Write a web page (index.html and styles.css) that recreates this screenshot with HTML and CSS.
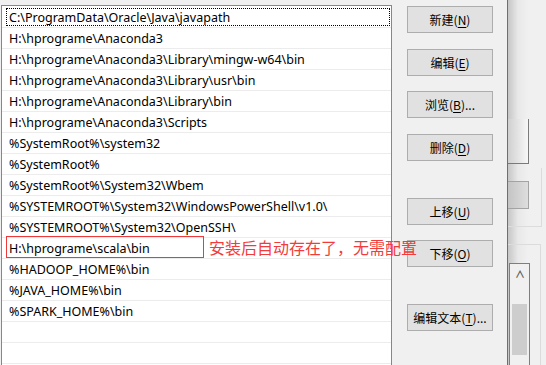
FILE: index.html
```html
<!DOCTYPE html>
<html lang="zh-CN">
<head>
    <meta charset="UTF-8">
    <title>编辑环境变量</title>
    <link rel="stylesheet" href="styles.css">
</head>
<body>
    <div class="page">
        <div class="dialog">
            <div class="path-list">
                <div class="row focused">C:\ProgramData\Oracle\Java\javapath</div>
                <div class="row">H:\hprograme\Anaconda3</div>
                <div class="row">H:\hprograme\Anaconda3\Library\mingw-w64\bin</div>
                <div class="row">H:\hprograme\Anaconda3\Library\usr\bin</div>
                <div class="row">H:\hprograme\Anaconda3\Library\bin</div>
                <div class="row">H:\hprograme\Anaconda3\Scripts</div>
                <div class="row">%SystemRoot%\system32</div>
                <div class="row">%SystemRoot%</div>
                <div class="row">%SystemRoot%\System32\Wbem</div>
                <div class="row">%SYSTEMROOT%\System32\WindowsPowerShell\v1.0\</div>
                <div class="row">%SYSTEMROOT%\System32\OpenSSH\</div>
                <div class="row">H:\hprograme\scala\bin</div>
                <div class="row">%HADOOP_HOME%\bin</div>
                <div class="row">%JAVA_HOME%\bin</div>
                <div class="row">%SPARK_HOME%\bin</div>
                <div class="row"></div>
                <div class="row"></div>
                <div class="row"></div>
            </div>

            <div class="actions">
                <button class="btn">新建(<u>N</u>)</button>
                <button class="btn">编辑(<u>E</u>)</button>
                <button class="btn">浏览(<u>B</u>)...</button>
                <button class="btn">删除(<u>D</u>)</button>
                <button class="btn">上移(<u>U</u>)</button>
                <button class="btn">下移(<u>O</u>)</button>
                <button class="btn">编辑文本(<u>T</u>)...</button>
            </div>
        </div>

        <!-- window behind the dialog -->
        <div class="behind">
            <div class="behind-field"></div>
            <div class="behind-group"></div>
            <div class="behind-btn"></div>
            <div class="behind-panel"></div>
            <div class="behind-scroll">
                <span class="arrow">&#x2227;</span>
                <div class="thumb"></div>
            </div>
        </div>

        <div class="mark"></div>
        <div class="note">安装后自动存在了，无需配置</div>
    </div>
</body>
</html>
```

FILE: styles.css
```css
body {
    margin: 0;
    background-color: #f0f0f0;
    font-family: "Segoe UI", "Noto Sans", "Noto Sans CJK SC", sans-serif;
    font-size: 12.5px;
    overflow: hidden;
}
.page {
    position: relative;
    display: flex;
    height: 365px;
    overflow: hidden;
}
.dialog {
    display: flex;
    width: 507px;
    border-right: 1px solid #6f6f6f;
}
.path-list {
    margin: 5px 0 0 1px;
    width: 389px;
    height: 380px;
    padding-top: 1px;
    background: white;
    border: 1px solid #828790;
    border-bottom: none;
}
.row {
    position: relative;
    height: 20px;
    line-height: 21px;
    padding-left: 7px;
    border-bottom: 1px solid #ececec;
    color: #000;
    white-space: nowrap;
}
.row.focused::after {
    content: "";
    position: absolute;
    top: 1px;
    left: 4px;
    right: 1px;
    bottom: 1px;
    border: 1px dotted #000;
}
.actions {
    display: flex;
    flex-direction: column;
    margin-left: 15px;
    padding-top: 6px;
}
.btn {
    width: 86px;
    height: 27px;
    padding: 0;
    background-color: #e1e1e1;
    border: 1px solid #adadad;
    font-family: "Noto Sans CJK SC", "Noto Sans", sans-serif;
    font-size: 12px;
    color: #000;
}
.btn u {
    text-underline-offset: 2px;
}
.btn:nth-child(2),
.btn:nth-child(4) {
    margin-top: 16px;
}
.btn:nth-child(3),
.btn:nth-child(6) {
    margin-top: 15px;
}
.btn:nth-child(5),
.btn:nth-child(7) {
    margin-top: 37px;
}
.behind {
    position: relative;
    flex: 1;
    background: linear-gradient(to right, #c6c6c6, #e8e8e8 10px, #f0f0f0 20px);
}
.behind-field {
    position: absolute;
    left: 0;
    top: 119px;
    width: 20px;
    height: 44px;
    background: linear-gradient(to right, #d0d0d0, #f7f7f7);
    border-right: 1px solid #7a7a7a;
    border-bottom: 1px solid #7a7a7a;
}
.behind-group {
    position: absolute;
    left: 0;
    top: 168px;
    width: 33px;
    height: 58px;
    border-right: 1px solid #dcdcdc;
    border-bottom: 1px solid #dcdcdc;
}
.behind-btn {
    position: absolute;
    left: 0;
    top: 181px;
    width: 20px;
    height: 26px;
    background: linear-gradient(to right, #c4c4c4, #dedede);
    border: 1px solid #a3a3a3;
    border-left: none;
}
.behind-panel {
    position: absolute;
    left: 0;
    top: 244px;
    width: 32px;
    height: 130px;
    border-top: 1px solid #dcdcdc;
    border-right: 1px solid #dcdcdc;
}
.behind-scroll {
    position: absolute;
    left: 1px;
    top: 263px;
    width: 19px;
    height: 110px;
    background: #f0f0f0;
    border: 1px solid #7e7e7e;
    border-bottom: none;
}
.arrow {
    position: absolute;
    left: 5px;
    top: 2px;
    font-size: 10px;
    font-weight: bold;
    color: #606060;
}
.thumb {
    position: absolute;
    left: 2px;
    top: 40px;
    width: 15px;
    height: 51px;
    background: #cdcdcd;
}
.mark {
    position: absolute;
    left: 6px;
    top: 236px;
    width: 196px;
    height: 20px;
    border: 1px solid #ee3a3a;
}
.note {
    position: absolute;
    left: 209px;
    top: 237px;
    font-family: "Noto Sans CJK SC", sans-serif;
    font-size: 16px;
    line-height: 20px;
    color: #f23c3c;
    white-space: nowrap;
}
```
